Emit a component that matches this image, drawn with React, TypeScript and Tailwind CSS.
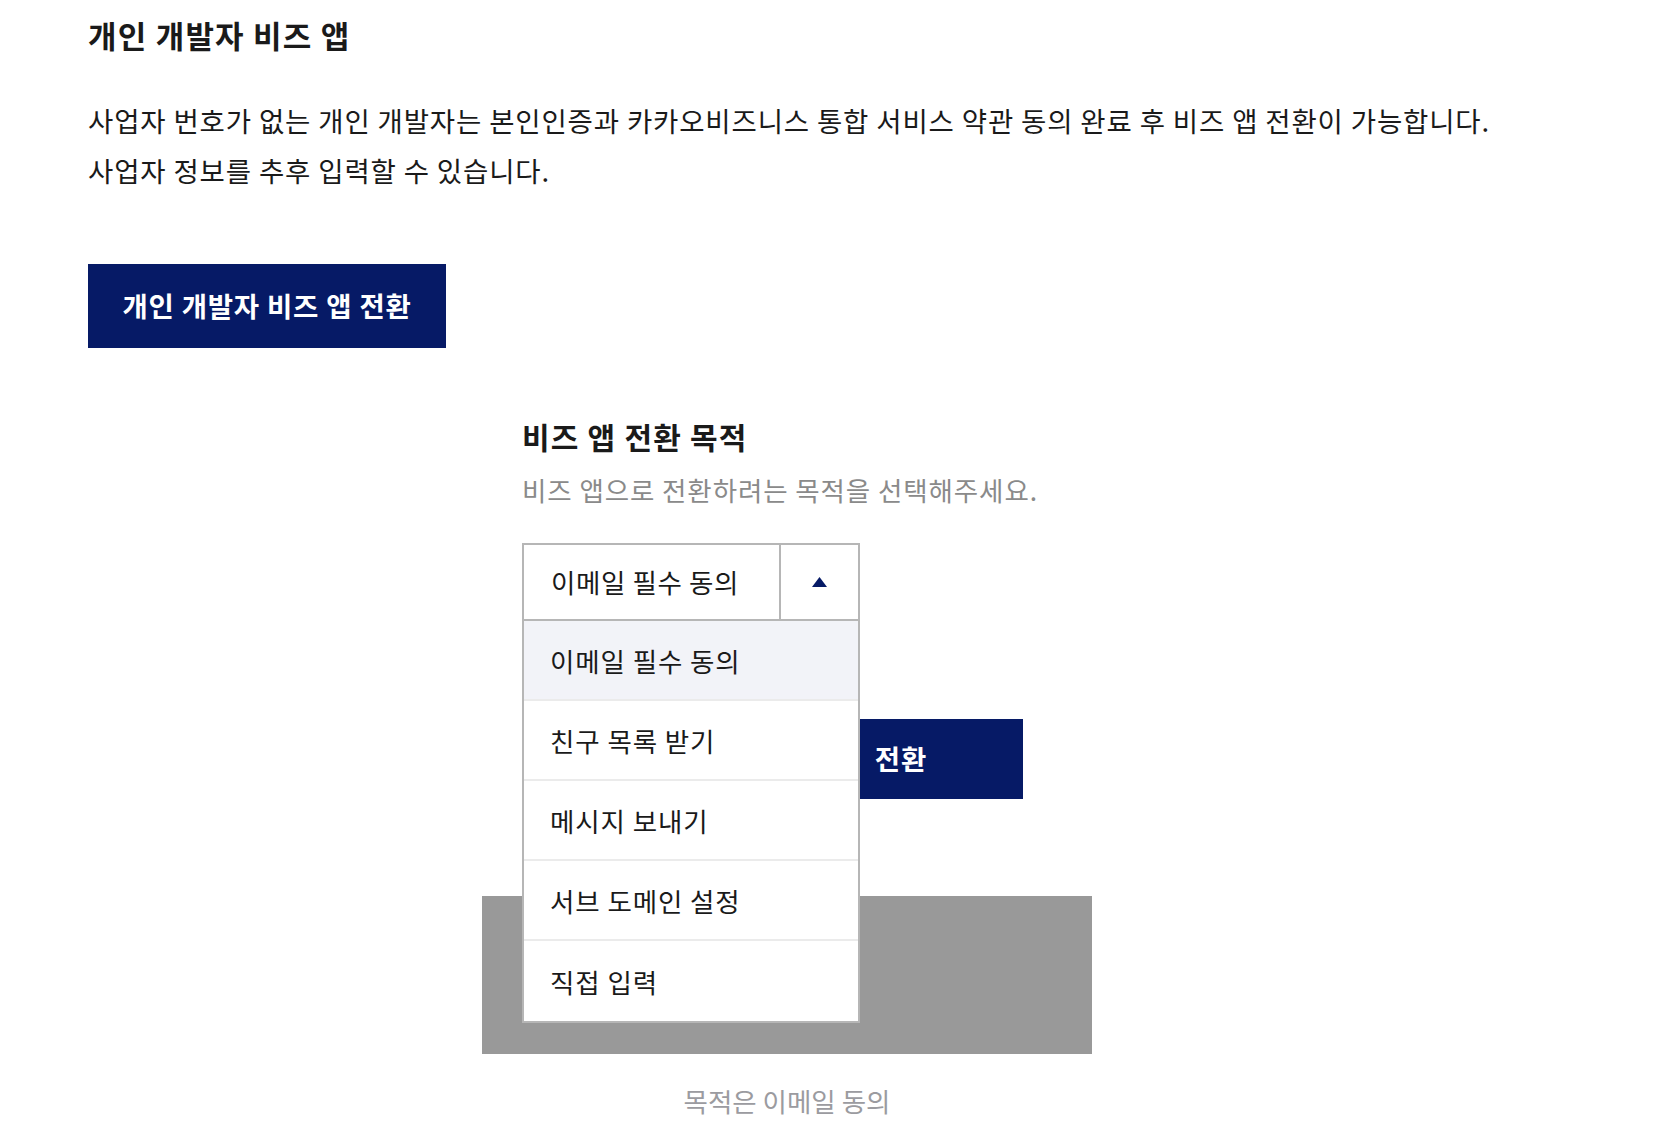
import { useState } from "react"

const options = ["이메일 필수 동의", "친구 목록 받기", "메시지 보내기", "서브 도메인 설정", "직접 입력"]

export default function App() {
  const [selected, setSelected] = useState(0)
  const [open, setOpen] = useState(true)

  return (
    <div
      className="min-h-[1140px] bg-white pl-[88px] pt-[14px] text-[#1a1a1a]"
      style={{ fontFamily: '"Noto Sans CJK KR", "Noto Sans", sans-serif' }}
    >
      <h1 className="text-[31px] font-bold leading-[42px] tracking-[1.2px]">개인 개발자 비즈 앱</h1>
      <p className="mt-[39px] text-[27.5px] leading-[50px] tracking-[0.85px]">
        사업자 번호가 없는 개인 개발자는 본인인증과 카카오비즈니스 통합 서비스 약관 동의 완료 후 비즈 앱 전환이 가능합니다.
        <br />
        사업자 정보를 추후 입력할 수 있습니다.
      </p>
      <button className="mt-[69px] flex h-[84px] w-[358px] items-center justify-center bg-[#061a66] text-[27.5px] font-bold tracking-[0.8px] text-white">
        개인 개발자 비즈 앱 전환
      </button>

      {/* Purpose section */}
      <div className="ml-[394px] mt-[68px] w-[610px]">
        <div className="px-[40px]">
          <h2 className="text-[30px] font-bold leading-[40px] tracking-[1.2px]">비즈 앱 전환 목적</h2>
          <p className="mt-[16px] text-[26.5px] leading-[36px] tracking-[0.9px] text-[#8a8a8a]">
            비즈 앱으로 전환하려는 목적을 선택해주세요.
          </p>

          <div className="relative mt-[35px] w-[338px]">
            <div
              onClick={() => setOpen(!open)}
              className="flex h-[78px] cursor-pointer border-2 border-[#b6b6b6] bg-white"
            >
              <div className="flex flex-1 items-center pl-[27px] text-[26.5px] tracking-[0.6px]">{options[selected]}</div>
              <div className="flex w-[79px] items-center justify-center border-l-2 border-[#b6b6b6]">
                <svg width="15" height="10" viewBox="0 0 15 10">
                  <path d="M7.5 0 L15 10 L0 10 Z" fill="#061a66" />
                </svg>
              </div>
            </div>
            {open && (
              <ul className="absolute left-0 top-full z-10 w-full border-x-2 border-b-2 border-[#b6b6b6] bg-white">
                {options.map((opt, i) => (
                  <li
                    key={opt}
                    onClick={() => {
                      setSelected(i)
                      setOpen(false)
                    }}
                    className={`flex h-[80px] cursor-pointer items-center pl-[26px] pt-[2px] text-[26.5px] tracking-[0.9px] ${
                      i < options.length - 1 ? "border-b-2 border-[#ebebeb]" : ""
                    } ${i === selected ? "bg-[#f2f3f8]" : "bg-white"}`}
                  >
                    {opt}
                  </li>
                ))}
              </ul>
            )}
          </div>
        </div>

        <button className="ml-[69px] mt-[98px] flex h-[80px] w-[472px] items-center justify-end bg-[#061a66] pr-[96px] text-[27.5px] font-bold tracking-[0.8px] text-white [word-spacing:14px]">
          개인 개발자 비즈 앱 전환
        </button>

        <div className="mt-[97px] h-[158px] w-full bg-[#999999]" />

        <p className="mt-[29px] text-center text-[26.5px] leading-[36px] text-[#9b9ba0]">목적은 이메일 동의</p>
      </div>
    </div>
  )
}
